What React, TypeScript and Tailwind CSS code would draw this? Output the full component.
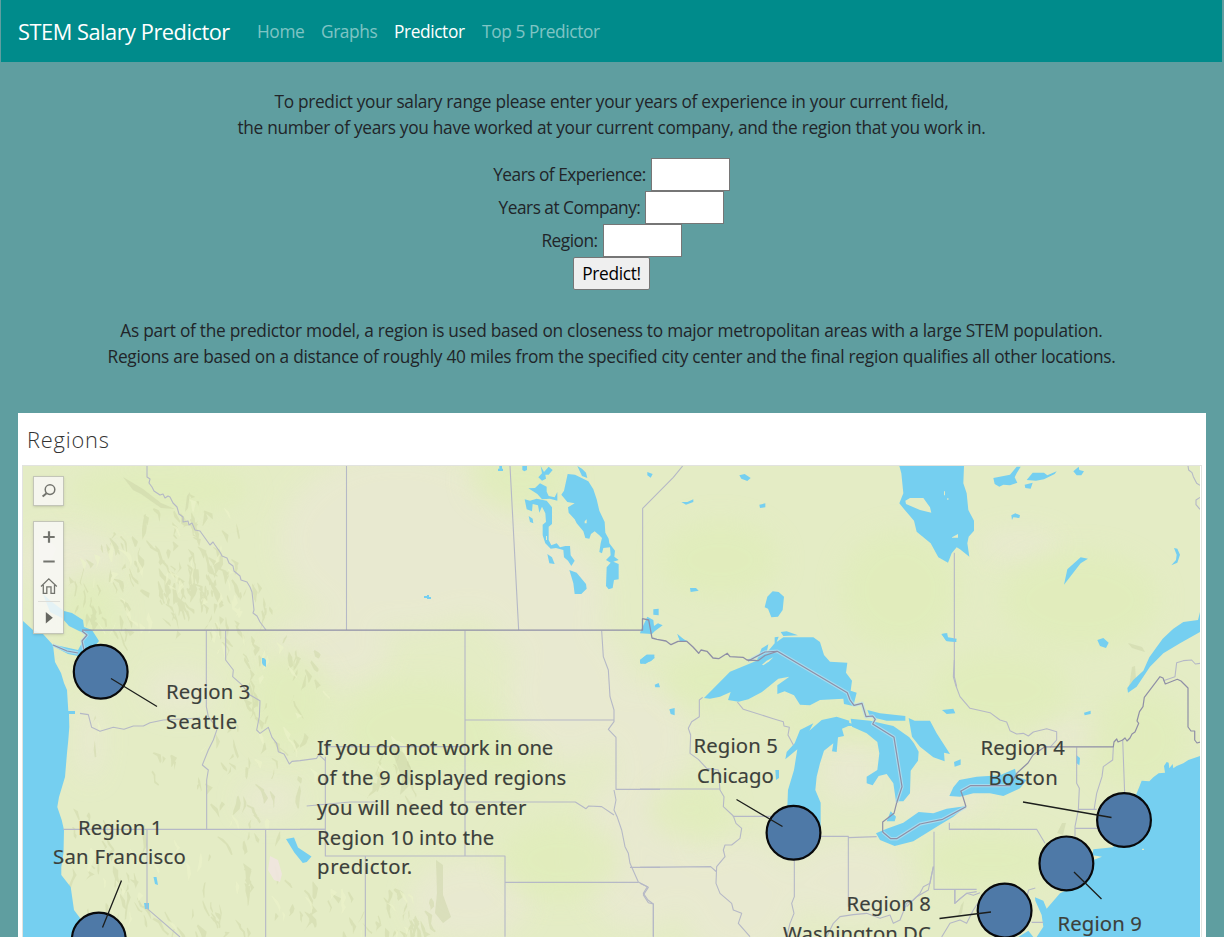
import React from "react";

const WATER = "#75cff0";
const LAND = "#e4ecc5";

function rng(seed: number) {
  let s = seed;
  return () => {
    s = (s * 16807) % 2147483647;
    return s / 2147483647;
  };
}

// [cx, cy, rx, ry, count]
const RANGES: number[][] = [
  [140, 580, 75, 55, 70],
  [175, 550, 70, 60, 60],
  [215, 600, 60, 50, 60],
  [280, 680, 45, 50, 34],
  [255, 770, 60, 70, 44],
  [120, 780, 55, 110, 22],
  [105, 880, 35, 50, 22],
  [210, 890, 90, 55, 38],
  [390, 780, 22, 45, 14],
  [390, 915, 50, 30, 34],
  [325, 910, 35, 30, 18],
];

function makeHills() {
  const r = rng(77123);
  const dark: string[] = [];
  const light: string[] = [];
  RANGES.forEach(([cx, cy, rx, ry, n]) => {
    for (let i = 0; i < n; i++) {
      const a = r() * Math.PI * 2;
      const d = Math.sqrt(r());
      let x = cx + Math.cos(a) * d * rx;
      let y = cy + Math.sin(a) * d * ry;
      const segs = 2 + Math.floor(r() * r() * 4);
      const lean = (r() - 0.3) * 5;
      const wid = 1.5 + r() * 3.5;
      const left: string[] = [];
      const right: string[] = [];
      for (let k = 0; k <= segs; k++) {
        const w = k === 0 || k === segs ? r() * 1.5 : wid * (0.4 + r());
        left.push(`${x.toFixed(1)} ${y.toFixed(1)}`);
        right.unshift(`${(x + w).toFixed(1)} ${(y - r() * 2).toFixed(1)}`);
        x += lean + (r() - 0.5) * 5;
        y += 2 + r() * 6;
      }
      (i % 5 === 0 ? light : dark).push(`M${left.concat(right).join("L")}Z`);
    }
  });
  return { dark: dark.join(""), light: light.join("") };
}

const hills = makeHills();

const TAN: number[][] = [
  [400, 540, 120, 90],
  [570, 690, 60, 70],
  [545, 600, 60, 60],
  [330, 650, 60, 35],
  [640, 850, 60, 80],
  [650, 740, 40, 60],
  [740, 900, 60, 60],
  [850, 770, 28, 35],
  [850, 880, 60, 40],
  [490, 560, 60, 60],
  [180, 690, 35, 22],
  [90, 740, 12, 40],
  [270, 800, 30, 18],
  [470, 900, 60, 40],
  [1020, 545, 40, 14],
  [1080, 735, 50, 14],
  [940, 800, 50, 18],
  [65, 560, 50, 30],
];

const GREEN: number[][] = [
  [160, 490, 90, 25],
  [520, 480, 50, 30],
  [720, 560, 60, 40],
  [900, 590, 60, 60],
  [1080, 600, 80, 50],
  [720, 680, 60, 30],
  [1140, 740, 50, 50],
  [990, 860, 70, 30],
  [500, 760, 40, 20],
  [420, 730, 80, 50],
  [560, 860, 60, 40],
  [90, 620, 30, 50],
  [290, 700, 40, 50],
  [860, 720, 80, 20],
  [690, 810, 40, 30],
  [1000, 690, 70, 40],
];

type Label = { t: string; x: number; y: number; w: number };

const LABELS: Label[] = [
  { t: "Region 3", x: 166, y: 699, w: 84 },
  { t: "Seattle", x: 166, y: 729, w: 71 },
  { t: "Region 1", x: 78, y: 834.5, w: 84 },
  { t: "San Francisco", x: 53, y: 864, w: 132.5 },
  { t: "Region 5", x: 693.5, y: 753, w: 84 },
  { t: "Chicago", x: 697, y: 783, w: 76.5 },
  { t: "Region 4", x: 980.5, y: 755, w: 84 },
  { t: "Boston", x: 988.5, y: 785, w: 69 },
  { t: "Region 8", x: 846.5, y: 911, w: 84 },
  { t: "Washington DC", x: 783, y: 941, w: 147.5 },
  { t: "Region 9", x: 1057.5, y: 931, w: 84 },
  { t: "If you do not work in one", x: 317, y: 755, w: 236 },
  { t: "of the 9 displayed regions", x: 317, y: 785, w: 249 },
  { t: "you will need to enter", x: 317, y: 815, w: 209 },
  { t: "Region 10 into the", x: 317, y: 844.5, w: 177 },
  { t: "predictor.", x: 317, y: 874, w: 95 },
];

const CITIES: number[][] = [
  [100.7, 671.8],
  [793.5, 832.8],
  [1124, 820],
  [1066.4, 863.4],
  [1004.6, 910.6],
  [98.8, 939.5],
];

function RegionMap() {
  return (
    <svg className="block h-[471px] w-[1177px]" viewBox="23 466 1177 471">
      <defs>
        <filter id="soft" x="-50%" y="-50%" width="200%" height="200%">
          <feGaussianBlur stdDeviation="12" />
        </filter>
      </defs>
      <rect x="23" y="466" width="1177" height="471" fill={LAND} />
      <g fill="#e9e9d2" opacity="0.85" filter="url(#soft)">
        {TAN.map(([x, y, a, b], i) => (
          <ellipse key={i} cx={x} cy={y} rx={a} ry={b} />
        ))}
      </g>
      <g fill="#e0edba" opacity="0.75" filter="url(#soft)">
        {GREEN.map(([x, y, a, b], i) => (
          <ellipse key={i} cx={x} cy={y} rx={a} ry={b} />
        ))}
      </g>
      <path d={hills.dark} fill="#ccd5a6" opacity="0.48" />
      <path d={hills.light} fill="#ebf2c9" opacity="0.7" />
      <path d="M270 856l8 4 4 14-2 8-6-2-6-10zM38 541l10-4 8 12-6 14-10-4z" fill="#efe6df" opacity="0.9" />
      <g fill="#cbd4a8" opacity="0.5">
        <path d="M123 477l20 12 18 14 14 6-14-1-20-14-8-4zM187 496l3-4-2 16-3 4zM1128 643l14 4 3 5-13-4zM1132 667l3-1 1 14-8 11 2-10zM436 860l7 5 0 30 8 22-8 6-8-10 2-20zM390 745l14 8 8 18-4 16-8 8 2-16z" />
        <path d="M1062 823l4 0-3 12-6-2zM961 905l3-4-2 12-5 6z" />
      </g>

      <g fill={WATER}>
        <path d="M23 621L33 630 43 634 53 645 55 662 61 673 64 683 67 690 68.3 711 75 711V714H69L69.3 727 68.3 740 67 753 65 777 59 797 57.3 807 61.7 820 64 830 63.5 853 61.3 867V875L70.7 887 74 910 80 918 84 937H23Z" />
        <path d="M43 594L52 602 64 611 72 613 83 620 84 627 92 630 99 641 95 646 86 649 78 656 68 654 51 645 60 646 78 650 83 641 87 634 79 631 69 626 62 618 50 612Z" />
        <path d="M424 596h3v-1h2v2h2v2h-4v-1h-3z" />
        <path d="M262 658h2l2 2v7l-3-2-1-2zM286 839l8-1.5 4 10 13.5 9-4.7 5.5-4 1-8.5-10.5zM153.5 877l3 0 1.5 8-3-1zM144 903h5v6h-4z" />
      </g>
      <g fill={WATER} transform="translate(480 460) scale(.33333)">
        <path d="M263 42L285 44 305 54 325 64 340 88 350 118 358 152 374 186 376 218 386 236 388 250 405 272 403 290 416 300 400 305 416 312 416 358 402 360 398 384 386 388 378 378 380 322 392 308 378 300 392 286 390 262 370 264 366 280 358 276 362 250 366 234 358 226 344 214 333 222 328 236 316 234 310 214 290 190 284 178 266 158 264 142 284 130 262 126 244 104 252 92Z" />
        <path d="M292 18L306 26 318 38 322 54 306 48ZM145 85L165 84 180 70 200 80 200 95 206 108 224 112 232 96 232 122 210 116 186 118 172 102Z" />
        <path d="M134 118L150 122 170 116 200 122 216 142 216 192 206 200 206 240 214 256 230 250 240 262 256 258 270 258 272 286 284 302 274 318 264 302 252 292 250 270 228 264 212 266 196 250 188 226 188 194 198 186 196 160 186 140 178 158 174 136 158 132 156 154 140 148Z" />
        <path d="M146 168L158 176 160 190 150 186ZM202 282L216 292 224 312 208 310ZM268 330L290 338 318 372 320 386 304 402 284 402 280 370ZM182 18L192 36 206 20 218 30 206 44 196 44 198 56 186 62 175 52 186 40ZM58 18h8v8h3v7h-15v-7h4zM127 18h14v12l-8 4-6-4z" />
        <path d="M502 36L518 42 512 53 502 46ZM778 46L794 42 812 54 802 63 784 56ZM604 126L622 126 640 118 640 126 618 134ZM838 134L856 130 856 142 840 144ZM630 384L648 384 656 392 632 396Z" />
        <path d="M862 410L878 394 896 396 912 410 908 450 894 470 874 472 864 446 854 442ZM520 448L536 446 536 466 520 464ZM484 508L480 520 516 522 524 514 540 502 548 496 534 490 522 498 520 480 502 470 488 500ZM592 522L606 536 624 544 600 542ZM480 600L500 584 522 584 524 594 512 604 482 612ZM524 674L536 669 540 682 526 682Z" />
        <path d="M314 184l6-6v12h-6zM198 228h3v12h-3z" fill={LAND} />
      </g>
      <g fill={WATER} transform="translate(640 620) scale(.33333)">
        <path d="M192 234L270 155 350 122 365 85 385 73 380 98 404 70 404 52 416 50 410 66 430 52 520 52 540 66 552 105 570 125 622 128 618 158 636 182 632 212 650 218 640 258 612 252 610 236 540 240 510 256 480 254 462 226 434 214 412 222 412 196 448 170 415 176 366 216 325 238 296 245 264 240 272 216 240 230 210 236Z" />
        <path d="M422 36L440 34 474 46 430 48ZM112 42L124 52 142 66 120 64Z" />
        <path d="M442 560L444 510 462 450 472 388 436 418 440 396 464 370 480 330 520 310 508 332 545 300 590 290 628 302 625 318 606 326 612 348 594 352 590 396 576 394 580 370 552 392 540 430 530 470 526 510 542 548 542 620 460 640Z" />
        <path d="M632 296L690 302 760 318 808 352 822 370 836 395 834 422 812 452 810 520 790 544 768 544 760 490 740 462 716 468 698 496 680 490 680 470 712 450 718 400 712 366 680 340 636 320ZM612 300L636 312 640 318 612 318Z" />
        <path d="M682 270L720 280 796 288 796 302 740 302 690 290ZM806 294L824 302 870 302 890 340 930 402 912 398 914 424 880 412 840 380 816 350ZM942 426L962 418 962 434 944 440Z" />
        <path d="M708 640L740 626 790 608 836 576 880 580 920 566 980 558 940 590 900 614 820 664 764 678 720 660ZM752 574L768 590 764 604 740 604ZM406 450h11v24l-9 6zM88 268L104 264 104 286 92 282ZM0 120L20 104 44 104 36 120 16 132 0 130ZM905 42L920 40 924 52 950 56 948 66 918 62ZM906 270L940 266 946 280 920 282Z" />
        <path d="M366 134L380 122 400 112 388 124 370 136Z" fill={LAND} />
      </g>
      <g fill={WATER} transform="translate(860 460) scale(.33333)">
        <path d="M118 18L312 18 310 70 320 100 325 150 342 182 342 212 326 230 322 250 328 290 300 268 290 262 275 280 264 308 235 292 212 250 170 215 162 182 130 145 118 130 130 100 124 40Z" />
        <path d="M400 54L450 44 470 20 482 20 470 40 464 52 472 68 450 76 430 74 418 80 404 72ZM500 60L518 38 552 38 562 46 590 34 584 42 552 58 528 62ZM494 74L518 68 512 86 496 84ZM640 34L656 20 658 30 672 34 664 46 650 46ZM454 166L466 160 480 166 478 174 460 172 456 180ZM612 374L622 328 662 292 684 296 662 310ZM942 264L952 266 960 284 952 308 934 316 948 300 950 284ZM712 540L730 534 746 548 738 564 720 558Z" />
        <path d="M1020 456V516L960 550 910 580 870 620 830 680 804 698 802 684 820 660 850 632 868 592 908 536 940 506 970 486 1014 480Z" />
        <path d="M136 122L150 114 190 114 210 142 214 158 180 150 138 132ZM276 232L294 222V233H276ZM252 94h3v12h-3zM262 114h3v6h-3z" fill={LAND} />
      </g>
      <g fill={WATER} transform="translate(900 660) scale(.33333)">
        <path d="M901 288L865 300 850 310 830 318 820 325 818 312 808 325 806 308 800 306 792 318 795 338 776 340 760 352 748 364 725 362 718 380 710 400 700 430 640 562 580 568 575 600 540 672 480 700 440 746 430 722 405 712 406 722 425 765 430 800 410 831H901Z" />
        <path d="M148 408L160 382 178 360 230 350 300 346 345 326 350 350 380 360 360 385 310 408 270 400 220 400 180 410ZM528 284L540 294 538 316 528 308ZM552 158L572 152 572 162 554 166ZM355 831L385 812 400 831Z" />
        <path d="M578 586L606 590 580 600ZM726 566h6v4h-6z" fill={LAND} />
      </g>

      <g fill="none" stroke="#b5b8c6" strokeWidth="1.1" strokeLinejoin="round">
        <path d="M346.5 466V630M147 466V477L150 479 149 483 152 487 154 491 160 495 163 494 165 498 168 496 170 497 173 503 177 507 179 514 183 517 183 522 188 521 189 525 192 523 195 530 200 531 205 538 210 545 213 542 215 545 220 552 222 556 227 558 229 563 233 566 234 571 240 576 241 580 247 582 250 587 252 592 254 610 253 613 257 616 260 622 266 630" />
        <g transform="translate(0 640) scale(.33333)" strokeWidth="3.3">
          <path d="M619 -28V200L625 230 652 265 640 300 625 330 607 375 625 390 620 420V570M190 568H976M677 -28V60L700 90 698 110 725 134 750 165 780 182 778 230 770 270 780 280 805 262 816 292 830 310 835 335 852 342 868 372 876 364 900 362 950 355 956 344 976 362M240 220L265 224 275 262 300 274 340 262 372 268 400 258 430 258 450 248 490 240 600 234M441 568V805L540 891M797 568V891" />
        </g>
        <g transform="translate(300 600) scale(.33333)" strokeWidth="3.3">
          <path d="M76 470V768H615V1010M76 440H495M495 92V768M495 360H942M495 606H826L858 626 866 618 905 620 942 645M20 618L150 606H230M905 92L910 170 925 210 930 290 942 330 942 365 925 388 948 412V568H1080M942 570L948 600 942 630 952 652 965 690 975 740 985 760 990 790 1015 846 1045 862 1030 885 1045 908 1060 912V1010M615 847H1015M990 802H1080M196 768V1010M0 688H76" />
        </g>
        <g transform="translate(480 460) scale(.33333)" strokeWidth="3.3">
          <path d="M90 18L116 510M608 18L580 52 488 145V476" />
        </g>
        <g transform="translate(640 620) scale(.33333)" strokeWidth="3.3">
          <path d="M188 232L178 240V290L155 305 145 325 152 345 150 400 175 418 200 445 235 450 240 510 252 530 250 560 280 588 288 610 305 625 300 655 275 675 255 675 250 690 255 710 230 740 228 790 240 820 275 850 280 870 305 880 295 910 330 950M0 507H240M0 742L212 740 230 756M278 589H395M543 649H625V860M625 653L710 650M463 720V830L455 850 462 880 450 910 440 950M882 635V808H1010M928 608V628H1080M880 740L870 790 850 800 840 820 820 840 800 850 780 900 760 910 750 885 720 895 680 880 640 884 600 890 580 910 560 950M292 246L310 268 400 296 430 305 432 318 448 322 444 345 460 375M944 808V850L980 820 1010 815M0 790L22 800 10 820 24 840 40 852V950M943 0V170L950 200" />
        </g>
        <g transform="translate(860 460) scale(.33333)" strokeWidth="3.3">
          <path d="M283 278V480M984 18L986 30 996 38 1000 50 1010 70 1020 76M1020 112L1008 120V134L1020 148M910 662L945 650 950 608 970 602 995 600 1006 612 1020 610" />
        </g>
        <g transform="translate(900 660) scale(.33333)" strokeWidth="3.3">
          <path d="M163 0L160 50 168 78 180 110 210 145 270 158 300 180 320 186 330 212 350 222 370 220 385 228 400 216 440 206 470 215 470 240 450 262M148 508H410L435 550M530 262V370L538 385 535 450 525 500V530M640 262L638 300 610 320 606 350 590 400 582 450M668 238L674 400M535 448H590M525 505H595M395 787H430M380 710L386 690 406 684M165 688V730L180 716 200 700 220 706 240 698M240 720L220 750 200 790 180 780 150 790 125 831M100 620L85 690 50 710 20 740" />
        </g>
      </g>
      <path transform="translate(860 460) scale(.33333)" d="M244 522L262 520 262 534 286 538 290 545 260 544Z" fill={WATER} />

      <g fill="none" strokeLinejoin="round">
        {[
          { c: "#b9dfee", w: 3.4, o: 0.7 },
          { c: "#8f8fa6", w: 1.2, o: 1 },
        ].map((s, i) => (
          <g key={i} stroke={s.c} strokeWidth={s.w} opacity={s.o}>
            <path d="M748 661L765 652 777.3 651.3 847.3 692.7 850 700 854 705.3 862 703.3 866 716.7 872.7 716 875.3 719.3 872.7 724 894 737.3 902 786.7 896.7 802.7M882.7 832L890.7 838.7 896.7 838.7 920 824 942.7 819.3 966 806.7M961 791L970.7 785.6H1010" />
            <path d="M53 645L67 651 78 653M84 650L82 641 87 635 82 631" />
          </g>
        ))}
        <g stroke="#8f8fa6" strokeWidth="1.2">
          <path d="M82 630.2H642.5V618.7L648.7 620 652 638 657 639.3 666 641 671 644.7 678 641.3 686.7 641.3 693 647 698.7 653.3 701 650 707 651.3 713 658 718.7 658.7 727.3 653.3 730 656.7 743 657.3 747 660 758 660.7 765 655.5 777 651.3" strokeWidth="1.3" />
          <path d="M896.7 802.7L894 813.3 882.7 822V832M966 806.7L963 797 960.7 790.7M1010 785.7L1017 773 1028 763 1033 755 1045 746.8H1113.3L1114 742 1116.7 739 1118 742 1122.7 740 1125 738 1127 741 1130 738 1132 734 1135 732 1138.7 723.3 1137 721 1139.5 711.7 1143 706.7 1144.3 697.3 1160 676.7 1163 678 1165.3 684 1177.3 679.3 1181 681 1188 688V727L1191 731 1194.7 731V740L1197 743 1200 742" />
        </g>
      </g>

      <g fill="#4e79a7" stroke="#08090b" strokeWidth="2.2">
        {CITIES.map(([x, y], i) => (
          <circle key={i} cx={x} cy={y} r="26.9" />
        ))}
      </g>
      <path
        d="M111 678.5L157 706.5M121.5 880.5L102.5 927.5M736.5 799.5L782.5 826.5M1023 802L1111.5 817.5M1074 872L1101.5 899M939.5 918.5L991 912"
        stroke="#1c1e1c"
        strokeWidth="1.3"
      />
      <g
        className="font-['Noto_Sans',sans-serif] text-[20.3px]"
        fill="#3c403b"
        stroke="#3c403b"
        strokeWidth="0.15"
      >
        {LABELS.map((l) => (
          <text key={l.t} x={l.x} y={l.y} textLength={l.w}>
            {l.t}
          </text>
        ))}
      </g>
    </svg>
  );
}

function MapControls() {
  return (
    <div className="absolute left-[10px] top-[10px] flex flex-col gap-[15px]">
      <button className="flex h-[30px] w-[31px] items-center justify-center border border-[#c3c5b8] bg-[#f6f6f2]/90 shadow-sm">
        <svg className="h-4 w-4" viewBox="0 0 16 16" fill="none" stroke="#73746e" strokeWidth="1.5">
          <circle cx="9" cy="6.6" r="4.8" />
          <path d="M5.6 10.2L1.6 13.6" strokeWidth="2" />
        </svg>
      </button>
      <div className="flex h-[113px] w-[31px] flex-col items-center border border-[#c3c5b8] bg-[#f8f8f6]/85 shadow-sm">
        <svg className="h-[111px] w-[29px]" viewBox="34 522 29 111" fill="none" stroke="#73746e">
          <path d="M43.3 537H54.7M49 531.3V542.7M43.3 561.5H54.7" strokeWidth="2.2" />
          <path d="M41 586.5L48.8 578.8 56.8 586.5M43.3 585V593.3H46.8V586.8H51V593.3H54.5V585" strokeWidth="1.3" />
          <path d="M38 601.5H60" stroke="#deded8" />
          <path d="M45.8 612L52.8 617.7 45.8 623.5Z" fill="#666761" stroke="none" />
        </svg>
      </div>
    </div>
  );
}

function Field({ label }: { label: string }) {
  return (
    <label className="flex h-[33px] items-center gap-[5px] tracking-[-0.5px]">
      <span>{label}</span>
      <input className="h-[33px] w-[79px] border border-[#767676] bg-white px-1 outline-none" />
    </label>
  );
}

export default function App() {
  return (
    <div className="h-[937px] w-[1224px] overflow-hidden bg-[#5f9ea0] font-['Open_Sans',sans-serif] text-[17.3px] leading-[26px] tracking-[-0.3px] text-[#212529]">
      <nav className="mx-px mr-[2px] flex h-[62px] items-center bg-[#008b8b] pl-[17px]">
        <a className="mr-[27px] w-[212px] whitespace-nowrap pt-px text-[21.8px] tracking-[-0.48px] text-white">
          STEM Salary Predictor
        </a>
        <div className="flex gap-[17px] whitespace-nowrap pt-[2px] tracking-[-0.38px] text-white/50">
          <a className="w-[47px]">Home</a>
          <a className="w-[56px]">Graphs</a>
          <a className="w-[71px] text-white">Predictor</a>
          <a>Top 5 Predictor</a>
        </div>
      </nav>
      <main className="flex flex-col items-center pr-px">
        <p className="mt-[27px] whitespace-nowrap text-center">
          To predict your salary range please enter your years of experience in your current field,
          <br />
          the number of years you have worked at your current company, and the region that you work in.
        </p>
        <form className="mt-[17px] flex flex-col items-center">
          <Field label="Years of Experience:" />
          <Field label="Years at Company:" />
          <Field label="Region:" />
          <button
            type="button"
            className="h-[33px] w-[77px] rounded-[2px] border border-[#767676] bg-[#efefef] pt-px text-center text-black"
          >
            Predict!
          </button>
        </form>
        <p className="mt-[28px] whitespace-nowrap text-center tracking-[-0.25px]">
          As part of the predictor model, a region is used based on closeness to major metropolitan areas with a large
          STEM population.
          <br />
          Regions are based on a distance of roughly 40 miles from the specified city center and the final region
          qualifies all other locations.
        </p>
      </main>
      <section className="ml-[18px] mt-[43px] h-[524px] w-[1188px] bg-white px-1">
        <h2 className="h-[52px] pl-[5px] pt-[14px] text-[21.8px] font-light tracking-[0.8px] text-[#333]">Regions</h2>
        <div className="relative w-[1180px] border border-b-0 border-[#e2e3df] bg-white">
          <RegionMap />
          <MapControls />
        </div>
      </section>
    </div>
  );
}
